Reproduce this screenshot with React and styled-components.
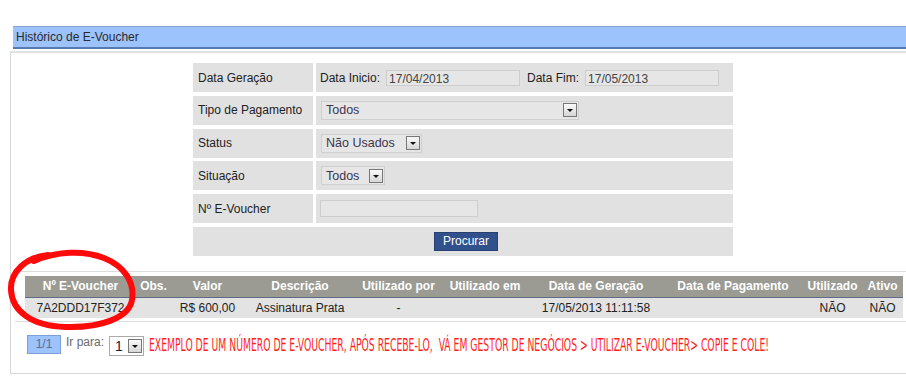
import React from "react";
import styled, { createGlobalStyle } from "styled-components";

const Global = createGlobalStyle`
  body {
    margin: 0;
    background: #fff;
    font-family: "Liberation Sans", Arial, sans-serif;
    font-size: 12px;
    color: #222;
    overflow: hidden;
  }
`;

const Page = styled.div`
  width: 906px;
  padding-top: 26px;
  margin-left: 10px;
`;

const TitleBar = styled.div`
  margin-left: 3px;
  height: 20px;
  line-height: 20px;
  padding-left: 3px;
  background: #9cc3fb;
  border-top: 1px solid #86a4d6;
  border-bottom: 2px solid #5a79b3;
  color: #2a2a2a;
  font-size: 12px;
`;

const Panel = styled.div`
  margin-top: 2px;
  border: 1px solid #d6d6d6;
  border-top: 2px solid #e2e2e2;
  padding: 10px 0 17px;
  position: relative;
`;

const Form = styled.div`
  width: 540px;
  margin: 0 auto;
  display: grid;
  grid-template-columns: 120px 417px;
  column-gap: 3px;
  row-gap: 3.8px;
  grid-auto-rows: 29px;
`;

const Cell = styled.div`
  background: #e1e1e1;
  display: flex;
  align-items: center;
  gap: 6px;
  padding-left: ${(p) => (p.$label ? 5 : 4)}px;
  color: #222;
  grid-column: ${(p) => (p.$wide ? "1 / span 2" : "auto")};
  justify-content: ${(p) => (p.$wide ? "center" : "flex-start")};
`;

const TextBox = styled.div`
  width: ${(p) => p.$w}px;
  height: ${(p) => p.$h || 16}px;
  line-height: 16px;
  background: #e6e6e6;
  border: 1px solid #cdcdcd;
  padding-left: 2px;
  color: #444;
  box-sizing: border-box;
`;

const Select = styled.div`
  width: ${(p) => p.$w}px;
  height: 19px;
  background: #e6e6e6;
  border: 1px solid #cfcfcf;
  box-sizing: border-box;
  display: flex;
  align-items: center;
  justify-content: space-between;
  padding: 0 1px 0 4px;
  color: #3b3550;
  font-size: 12.5px;
  margin-left: 1px;
`;

const Arrow = styled.span`
  width: 14px;
  height: 14px;
  flex-shrink: 0;
  box-sizing: border-box;
  border: 1px solid #777;
  background: linear-gradient(#fafafa, #d6d6d6);
  display: flex;
  align-items: center;
  justify-content: center;
  &::after {
    content: "";
    border-left: 3px solid transparent;
    border-right: 3px solid transparent;
    border-top: 3px solid #111;
    margin-top: 1px;
  }
`;

const Button = styled.button`
  font-family: inherit;
  font-size: 12px;
  color: #fff;
  background: #31518d;
  border: 1px solid #27406f;
  height: 19px;
  width: 64px;
  padding: 0;
  margin-left: 2px;
`;

const Results = styled.div`
  position: relative;
  margin: 15px 4px 0;
  border-top: 1px solid #dcdcdc;
  border-bottom: 1px solid #dcdcdc;
  padding: 4px 10px 3px;
`;

const Table = styled.table`
  width: 878px;
  border-collapse: collapse;
  table-layout: fixed;
`;

const Th = styled.th`
  background: #9b9b94;
  color: #fff;
  font-weight: bold;
  height: 21px;
  padding: 0;
  text-align: center;
  border-bottom: 1px solid #5e6b84;
  white-space: nowrap;
`;

const Td = styled.td`
  background: #e3e3e3;
  height: 20px;
  padding: 0;
  text-align: center;
  color: #222;
  white-space: nowrap;
`;

const Circle = styled.svg`
  position: absolute;
  left: -15px;
  top: -24px;
  pointer-events: none;
`;

const Pager = styled.div`
  display: flex;
  align-items: flex-start;
  margin: 13px 0 0 16px;
  white-space: nowrap;
  & > * {
    flex-shrink: 0;
  }
`;

const PageBox = styled.span`
  width: 34px;
  height: 19px;
  box-sizing: border-box;
  background: #9cc3fb;
  border: 1px solid #7d9ed6;
  color: #5b6d90;
  display: flex;
  align-items: center;
  justify-content: center;
`;

const GoLabel = styled.span`
  color: #6a6a6a;
  margin: 0 5px;
  line-height: 14px;
`;

const PageSelect = styled.div`
  width: 35px;
  height: 20px;
  box-sizing: border-box;
  border: 1px solid #aaa;
  background: #fff;
  display: flex;
  align-items: center;
  justify-content: space-between;
  padding: 0 1px 0 5px;
  font-size: 14px;
  color: #1a1a3a;
  margin-top: 1px;
`;

const Note = styled.span`
  color: #ff1f1f;
  font-family: "Liberation Sans Narrow", "DejaVu Sans Condensed", sans-serif;
  font-size: 17px;
  line-height: 20px;
  white-space: pre;
  margin: 0 0 0 5px;
  display: inline-block;
  transform-origin: left center;
  transform: scaleX(0.605);
`;

const cols = [111, 35, 73, 112, 85, 88, 134, 140, 59, 41];
const heads = [
  "Nº E-Voucher", "Obs.", "Valor", "Descrição", "Utilizado por",
  "Utilizado em", "Data de Geração", "Data de Pagamento", "Utilizado", "Ativo",
];
const row = [
  "7A2DDD17F372", "", "R$ 600,00", "Assinatura Prata", "-",
  "", "17/05/2013 11:11:58", "", "NÃO", "NÃO",
];

export default function App() {
  return (
    <Page>
      <Global />
      <TitleBar>Histórico de E-Voucher</TitleBar>
      <Panel>
        <Form>
          <Cell $label>Data Geração</Cell>
          <Cell>
            Data Inicio: <TextBox $w={134}>17/04/2013</TextBox>
            <span style={{ marginLeft: 1 }}>Data Fim:</span>
            <TextBox $w={134}>17/05/2013</TextBox>
          </Cell>
          <Cell $label>Tipo de Pagamento</Cell>
          <Cell>
            <Select $w={258}>Todos<Arrow /></Select>
          </Cell>
          <Cell $label>Status</Cell>
          <Cell>
            <Select $w={101}>Não Usados<Arrow /></Select>
          </Cell>
          <Cell $label>Situação</Cell>
          <Cell>
            <Select $w={64}>Todos<Arrow /></Select>
          </Cell>
          <Cell $label>Nº E-Voucher</Cell>
          <Cell>
            <TextBox $w={158} $h={17} />
          </Cell>
          <Cell $wide>
            <Button>Procurar</Button>
          </Cell>
        </Form>

        <Results>
          <Table>
            <colgroup>
              {cols.map((w, i) => (
                <col key={i} style={{ width: w }} />
              ))}
            </colgroup>
            <thead>
              <tr>
                {heads.map((h) => (
                  <Th key={h}>{h}</Th>
                ))}
              </tr>
            </thead>
            <tbody>
              <tr>
                {row.map((v, i) => (
                  <Td key={i}>{v}</Td>
                ))}
              </tr>
            </tbody>
          </Table>
          <Circle width="150" height="90" viewBox="0 0 150 90">
            <path
              d="M48 7 C26 9 10 24 11 42 C12 62 30 78 66 79 C100 80 129 70 132 52 C135 34 124 18 104 10 C84 2 56 3 34 13"
              fill="none"
              stroke="#ff0a0a"
              strokeWidth="6"
              strokeLinecap="round"
            />
          </Circle>
        </Results>

        <Pager>
          <PageBox>1/1</PageBox>
          <GoLabel>Ir para:</GoLabel>
          <PageSelect>1<Arrow /></PageSelect>
          <Note>EXEMPLO DE UM NÚMERO DE E-VOUCHER, APÓS RECEBE-LO,  VÁ EM GESTOR DE NEGÓCIOS &gt; UTILIZAR E-VOUCHER&gt; COPIE E COLE!</Note>
        </Pager>
      </Panel>
    </Page>
  );
}
